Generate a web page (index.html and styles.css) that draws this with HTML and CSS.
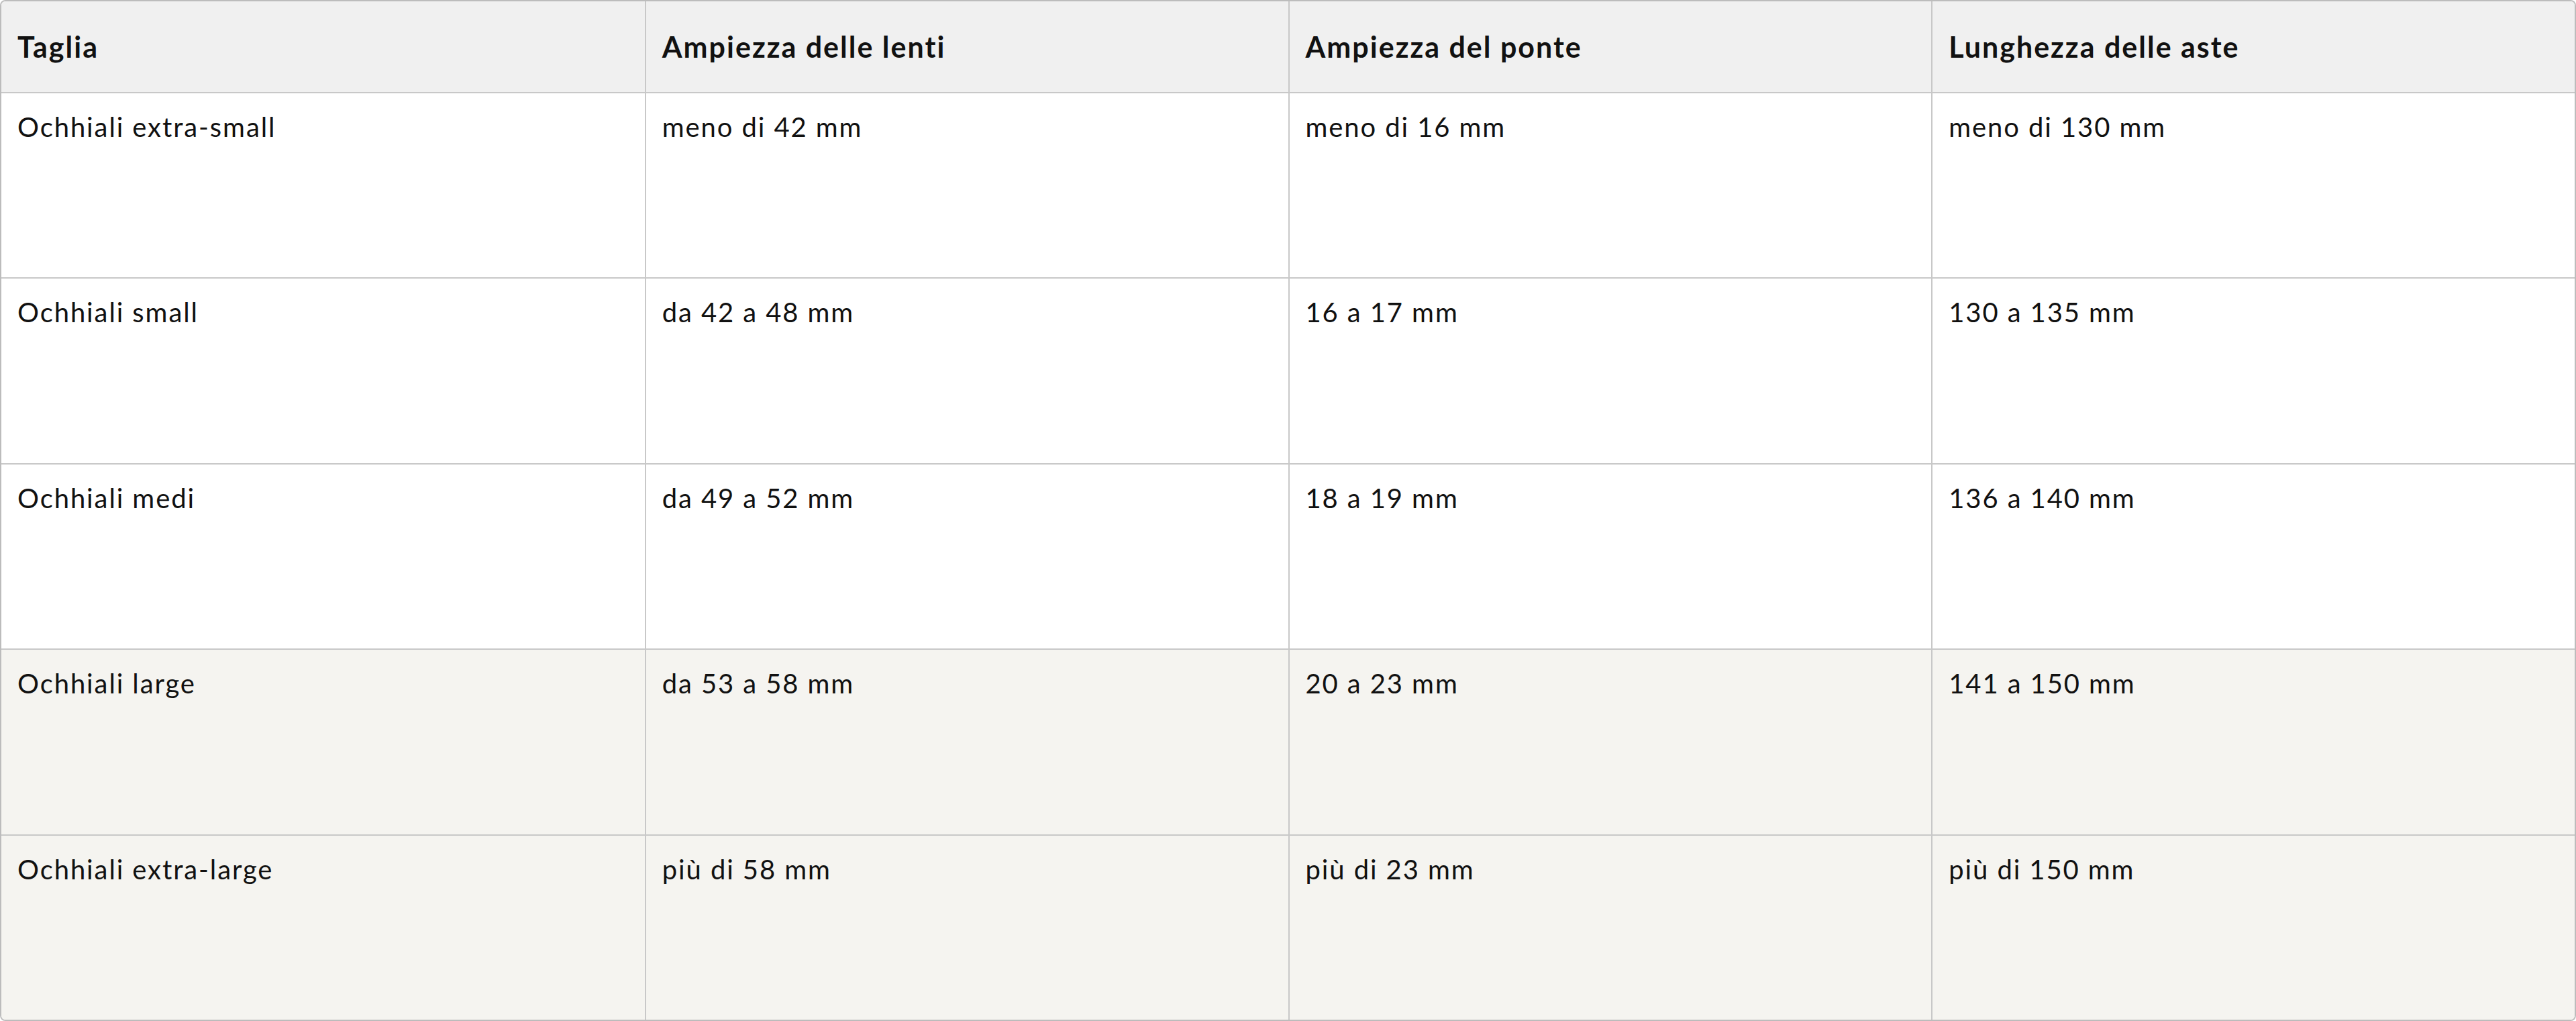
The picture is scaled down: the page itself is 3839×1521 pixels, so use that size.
FILE: index.html
```html
<!DOCTYPE html>
<html lang="it">
<head>
  <meta charset="UTF-8" />
  <meta name="viewport" content="width=device-width, initial-scale=1.0" />
  <title>Guida alle taglie</title>
  <link rel="stylesheet" href="styles.css">
</head>
<body>
  <div class="size-table">
    <table>
      <thead>
        <tr>
          <th>Taglia</th>
          <th>Ampiezza delle lenti</th>
          <th>Ampiezza del ponte</th>
          <th>Lunghezza delle aste</th>
        </tr>
      </thead>
      <tbody>
        <tr>
          <td>Ochhiali extra-small</td>
          <td>meno di 42 mm</td>
          <td>meno di 16 mm</td>
          <td>meno di 130 mm</td>
        </tr>
        <tr>
          <td>Ochhiali small</td>
          <td>da 42 a 48 mm</td>
          <td>16 a 17 mm</td>
          <td>130 a 135 mm</td>
        </tr>
        <tr>
          <td>Ochhiali medi</td>
          <td>da 49 a 52 mm</td>
          <td>18 a 19 mm</td>
          <td>136 a 140 mm</td>
        </tr>
        <tr class="tinted">
          <td>Ochhiali large</td>
          <td>da 53 a 58 mm</td>
          <td>20 a 23 mm</td>
          <td>141 a 150 mm</td>
        </tr>
        <tr class="tinted">
          <td>Ochhiali extra-large</td>
          <td>più di 58 mm</td>
          <td>più di 23 mm</td>
          <td>più di 150 mm</td>
        </tr>
      </tbody>
    </table>
  </div>
</body>
</html>
```

FILE: styles.css
```css
body {
  margin: 0;
  font-family: 'Lato', 'Liberation Sans', sans-serif;
  color: #111;
  background: white;
}

.size-table {
  border: 2px solid #bcbcbc;
  border-radius: 8px;
  overflow: hidden;
}

table {
  width: 100%;
  border-collapse: separate;
  border-spacing: 0;
  table-layout: fixed;
}

th,
td {
  text-align: left;
  vertical-align: top;
  padding: 0 24px;
  border-left: 2px solid #c8c8c8;
  border-bottom: 2px solid #c8c8c8;
}

th:first-child,
td:first-child {
  border-left: none;
}

th {
  height: 135px;
  vertical-align: middle;
  background: #f0f0f0;
  font-weight: 700;
  font-size: 43px;
  letter-spacing: 2px;
}

td {
  height: 276.4px;
  padding-top: 22px;
  box-sizing: border-box;
  font-size: 40px;
  line-height: 1.4;
  letter-spacing: 1.9px;
}

tbody tr:last-child td {
  height: 274.4px;
  border-bottom: none;
}

tr.tinted td {
  background: #f5f4f0;
}
```
